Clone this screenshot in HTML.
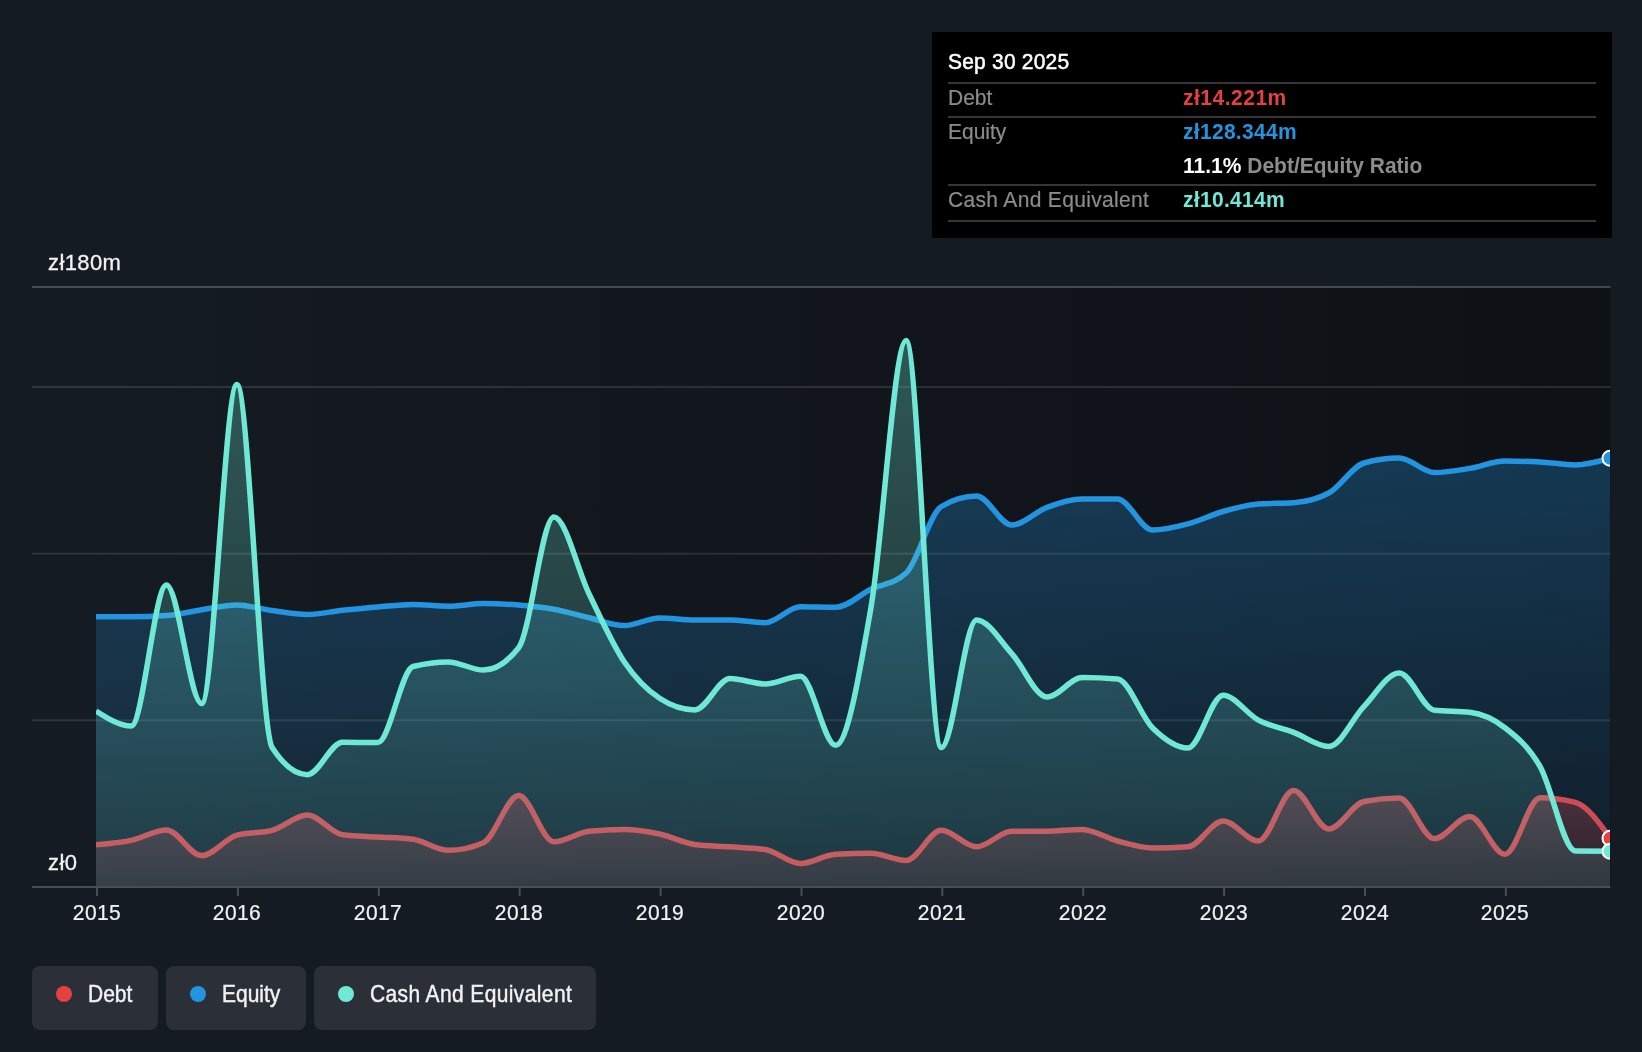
<!DOCTYPE html>
<html><head><meta charset="utf-8">
<style>
html,body{margin:0;padding:0;}
body{width:1642px;height:1052px;background:#151b22;position:relative;overflow:hidden;font-family:"Liberation Sans",sans-serif;color:#fff;}
svg{position:absolute;left:0;top:0;}
.t{position:absolute;white-space:nowrap;line-height:1;}
.sy{transform:scaleY(1.1);transform-origin:0 80%;will-change:transform;}
#tip .sy{transform:scaleY(1.04);}
.ax.sy{transform:scaleY(1.02);}
.yr.sy{transform:scaleY(1.08);}
.yr{position:absolute;top:901.5px;width:80px;text-align:center;font-size:21px;color:#f2f2f2;line-height:21px;letter-spacing:0.4px;-webkit-text-stroke:0.2px #f2f2f2;}
.ax{position:absolute;left:48px;font-size:22px;color:#f2f2f2;line-height:22px;letter-spacing:0.4px;-webkit-text-stroke:0.3px #f2f2f2;}
#tip{position:absolute;left:932px;top:32px;width:680px;height:206px;background:#000;}
.hl{position:absolute;left:16px;width:648px;height:2px;background:#363636;}
.lab{position:absolute;left:16px;font-size:21px;color:#8c8c8c;line-height:21px;-webkit-text-stroke:0.2px #8c8c8c;}
.val{position:absolute;left:251px;font-size:21px;font-weight:bold;line-height:21px;}
.pill{position:absolute;top:966px;height:64px;background:#2b2f37;border-radius:8px;}
.dot{position:absolute;top:20px;left:24px;width:16px;height:16px;border-radius:50%;}
.pt{position:absolute;left:56px;top:18px;font-size:21px;line-height:21px;color:#f2f2f2;-webkit-text-stroke:0.4px #f2f2f2;}
</style></head><body>
<svg width="1642" height="1052" viewBox="0 0 1642 1052">
<defs>
<linearGradient id="plotbg" x1="96" y1="0" x2="1610" y2="0" gradientUnits="userSpaceOnUse">
<stop offset="0" stop-color="#151b22"/><stop offset="1" stop-color="#0e1116"/>
</linearGradient>
<linearGradient id="gE" x1="0" y1="458" x2="0" y2="886" gradientUnits="userSpaceOnUse">
<stop offset="0" stop-color="#2394df" stop-opacity="0.30"/><stop offset="1" stop-color="#2394df" stop-opacity="0.09"/>
</linearGradient>
<linearGradient id="gC" x1="0" y1="340" x2="0" y2="886" gradientUnits="userSpaceOnUse">
<stop offset="0" stop-color="#6fe9d6" stop-opacity="0.31"/><stop offset="1" stop-color="#6fe9d6" stop-opacity="0.11"/>
</linearGradient>
<linearGradient id="gD" x1="0" y1="790" x2="0" y2="886" gradientUnits="userSpaceOnUse">
<stop offset="0" stop-color="#e64141" stop-opacity="0.32"/><stop offset="1" stop-color="#e64141" stop-opacity="0.12"/>
</linearGradient>
<clipPath id="clip"><rect x="96" y="0" width="1514" height="886"/></clipPath>
</defs>
<rect x="96" y="287" width="1514.5" height="600" fill="url(#plotbg)"/>
<rect x="32" y="286" width="1578.5" height="2" fill="#ffffff" fill-opacity="0.22"/>
<rect x="32" y="386" width="1578.5" height="2" fill="#ffffff" fill-opacity="0.11"/>
<rect x="32" y="552.7" width="1578.5" height="2" fill="#ffffff" fill-opacity="0.11"/>
<rect x="32" y="719.3" width="1578.5" height="2" fill="#ffffff" fill-opacity="0.11"/>
<g clip-path="url(#clip)">
<path d="M96.00,844.80C107.74,843.83,119.48,842.87,131.22,840.40C142.96,837.93,154.70,830.00,166.45,830.00C178.19,830.00,189.93,855.60,201.67,855.60C213.41,855.60,225.15,838.30,236.89,835.10C248.63,831.90,260.37,833.50,272.11,830.30C283.85,827.10,295.59,815.00,307.34,815.00C319.08,815.00,330.82,833.33,342.56,834.80C354.30,836.27,366.04,836.27,377.78,837.00C389.52,837.73,401.26,837.73,413.00,839.20C424.74,840.67,436.48,850.30,448.23,850.30C459.97,850.30,471.71,847.77,483.45,842.70C495.19,837.63,506.93,795.50,518.67,795.50C530.41,795.50,542.15,841.80,553.89,841.80C565.63,841.80,577.37,832.33,589.12,831.20C600.86,830.07,612.60,829.50,624.34,829.50C636.08,829.50,647.82,831.50,659.56,834.00C671.30,836.50,683.04,842.97,694.78,844.50C706.52,846.03,718.27,845.97,730.01,846.80C741.75,847.63,753.49,847.70,765.23,849.50C776.97,851.30,788.71,863.50,800.45,863.50C812.19,863.50,823.93,854.80,835.67,854.20C847.41,853.60,859.16,853.30,870.90,853.30C882.64,853.30,894.38,860.40,906.12,860.40C917.86,860.40,929.60,830.30,941.34,830.30C953.08,830.30,964.82,846.80,976.56,846.80C988.30,846.80,1000.05,831.20,1011.79,831.20C1023.53,831.20,1035.27,831.20,1047.01,831.20C1058.75,831.20,1070.49,829.50,1082.23,829.50C1093.97,829.50,1105.71,837.92,1117.45,841.00C1129.20,844.08,1140.94,848.00,1152.68,848.00C1164.42,848.00,1176.16,847.60,1187.90,846.80C1199.64,846.00,1211.38,821.00,1223.12,821.00C1234.86,821.00,1246.60,841.00,1258.34,841.00C1270.09,841.00,1281.83,790.50,1293.57,790.50C1305.31,790.50,1317.05,828.90,1328.79,828.90C1340.53,828.90,1352.27,803.83,1364.01,801.50C1375.75,799.17,1387.49,798.00,1399.23,798.00C1410.98,798.00,1422.72,838.60,1434.46,838.60C1446.20,838.60,1457.94,816.50,1469.68,816.50C1481.42,816.50,1493.16,854.20,1504.90,854.20C1516.64,854.20,1528.38,797.70,1540.12,797.70C1551.87,797.70,1563.61,799.27,1575.35,802.40C1587.09,805.53,1598.83,822.07,1610.57,838.60L1610.57,886 L96.00,886Z" fill="url(#gD)"/>
<path d="M96.00,844.80C107.74,843.83,119.48,842.87,131.22,840.40C142.96,837.93,154.70,830.00,166.45,830.00C178.19,830.00,189.93,855.60,201.67,855.60C213.41,855.60,225.15,838.30,236.89,835.10C248.63,831.90,260.37,833.50,272.11,830.30C283.85,827.10,295.59,815.00,307.34,815.00C319.08,815.00,330.82,833.33,342.56,834.80C354.30,836.27,366.04,836.27,377.78,837.00C389.52,837.73,401.26,837.73,413.00,839.20C424.74,840.67,436.48,850.30,448.23,850.30C459.97,850.30,471.71,847.77,483.45,842.70C495.19,837.63,506.93,795.50,518.67,795.50C530.41,795.50,542.15,841.80,553.89,841.80C565.63,841.80,577.37,832.33,589.12,831.20C600.86,830.07,612.60,829.50,624.34,829.50C636.08,829.50,647.82,831.50,659.56,834.00C671.30,836.50,683.04,842.97,694.78,844.50C706.52,846.03,718.27,845.97,730.01,846.80C741.75,847.63,753.49,847.70,765.23,849.50C776.97,851.30,788.71,863.50,800.45,863.50C812.19,863.50,823.93,854.80,835.67,854.20C847.41,853.60,859.16,853.30,870.90,853.30C882.64,853.30,894.38,860.40,906.12,860.40C917.86,860.40,929.60,830.30,941.34,830.30C953.08,830.30,964.82,846.80,976.56,846.80C988.30,846.80,1000.05,831.20,1011.79,831.20C1023.53,831.20,1035.27,831.20,1047.01,831.20C1058.75,831.20,1070.49,829.50,1082.23,829.50C1093.97,829.50,1105.71,837.92,1117.45,841.00C1129.20,844.08,1140.94,848.00,1152.68,848.00C1164.42,848.00,1176.16,847.60,1187.90,846.80C1199.64,846.00,1211.38,821.00,1223.12,821.00C1234.86,821.00,1246.60,841.00,1258.34,841.00C1270.09,841.00,1281.83,790.50,1293.57,790.50C1305.31,790.50,1317.05,828.90,1328.79,828.90C1340.53,828.90,1352.27,803.83,1364.01,801.50C1375.75,799.17,1387.49,798.00,1399.23,798.00C1410.98,798.00,1422.72,838.60,1434.46,838.60C1446.20,838.60,1457.94,816.50,1469.68,816.50C1481.42,816.50,1493.16,854.20,1504.90,854.20C1516.64,854.20,1528.38,797.70,1540.12,797.70C1551.87,797.70,1563.61,799.27,1575.35,802.40C1587.09,805.53,1598.83,822.07,1610.57,838.60" fill="none" stroke="#e64141" stroke-width="5.5" stroke-linejoin="round"/>
<path d="M96.00,616.80C107.74,616.80,119.48,616.80,131.22,616.80C142.96,616.80,154.70,616.40,166.45,615.60C178.19,614.80,189.93,611.47,201.67,609.70C213.41,607.93,225.15,605.00,236.89,605.00C248.63,605.00,260.37,609.02,272.11,610.60C283.85,612.18,295.59,614.50,307.34,614.50C319.08,614.50,330.82,611.55,342.56,610.30C354.30,609.05,366.04,607.98,377.78,607.00C389.52,606.02,401.26,604.40,413.00,604.40C424.74,604.40,436.48,606.20,448.23,606.20C459.97,606.20,471.71,603.60,483.45,603.60C495.19,603.60,506.93,604.07,518.67,605.00C530.41,605.93,542.15,607.08,553.89,609.20C565.63,611.32,577.37,614.98,589.12,617.70C600.86,620.42,612.60,625.50,624.34,625.50C636.08,625.50,647.82,618.00,659.56,618.00C671.30,618.00,683.04,620.00,694.78,620.00C706.52,620.00,718.27,620.00,730.01,620.00C741.75,620.00,753.49,622.70,765.23,622.70C776.97,622.70,788.71,606.80,800.45,606.80C812.19,606.80,823.93,607.30,835.67,607.30C847.41,607.30,859.16,595.02,870.90,589.30C882.64,583.58,894.38,583.87,906.12,573.00C917.86,562.13,929.60,513.43,941.34,506.50C953.08,499.57,964.82,496.10,976.56,496.10C988.30,496.10,1000.05,525.10,1011.79,525.10C1023.53,525.10,1035.27,511.73,1047.01,507.40C1058.75,503.07,1070.49,499.10,1082.23,499.10C1093.97,499.10,1105.71,499.10,1117.45,499.10C1129.20,499.10,1140.94,530.00,1152.68,530.00C1164.42,530.00,1176.16,526.98,1187.90,523.90C1199.64,520.82,1211.38,514.83,1223.12,511.50C1234.86,508.17,1246.60,504.70,1258.34,503.90C1270.09,503.10,1281.83,503.50,1293.57,502.70C1305.31,501.90,1317.05,499.47,1328.79,493.00C1340.53,486.53,1352.27,466.33,1364.01,463.00C1375.75,459.67,1387.49,458.00,1399.23,458.00C1410.98,458.00,1422.72,472.50,1434.46,472.50C1446.20,472.50,1457.94,470.30,1469.68,468.40C1481.42,466.50,1493.16,461.10,1504.90,461.10C1516.64,461.10,1528.38,461.37,1540.12,461.90C1551.87,462.43,1563.61,464.90,1575.35,464.90C1587.09,464.90,1598.83,461.55,1610.57,458.20L1610.57,886 L96.00,886Z" fill="url(#gE)"/>
<path d="M96.00,616.80C107.74,616.80,119.48,616.80,131.22,616.80C142.96,616.80,154.70,616.40,166.45,615.60C178.19,614.80,189.93,611.47,201.67,609.70C213.41,607.93,225.15,605.00,236.89,605.00C248.63,605.00,260.37,609.02,272.11,610.60C283.85,612.18,295.59,614.50,307.34,614.50C319.08,614.50,330.82,611.55,342.56,610.30C354.30,609.05,366.04,607.98,377.78,607.00C389.52,606.02,401.26,604.40,413.00,604.40C424.74,604.40,436.48,606.20,448.23,606.20C459.97,606.20,471.71,603.60,483.45,603.60C495.19,603.60,506.93,604.07,518.67,605.00C530.41,605.93,542.15,607.08,553.89,609.20C565.63,611.32,577.37,614.98,589.12,617.70C600.86,620.42,612.60,625.50,624.34,625.50C636.08,625.50,647.82,618.00,659.56,618.00C671.30,618.00,683.04,620.00,694.78,620.00C706.52,620.00,718.27,620.00,730.01,620.00C741.75,620.00,753.49,622.70,765.23,622.70C776.97,622.70,788.71,606.80,800.45,606.80C812.19,606.80,823.93,607.30,835.67,607.30C847.41,607.30,859.16,595.02,870.90,589.30C882.64,583.58,894.38,583.87,906.12,573.00C917.86,562.13,929.60,513.43,941.34,506.50C953.08,499.57,964.82,496.10,976.56,496.10C988.30,496.10,1000.05,525.10,1011.79,525.10C1023.53,525.10,1035.27,511.73,1047.01,507.40C1058.75,503.07,1070.49,499.10,1082.23,499.10C1093.97,499.10,1105.71,499.10,1117.45,499.10C1129.20,499.10,1140.94,530.00,1152.68,530.00C1164.42,530.00,1176.16,526.98,1187.90,523.90C1199.64,520.82,1211.38,514.83,1223.12,511.50C1234.86,508.17,1246.60,504.70,1258.34,503.90C1270.09,503.10,1281.83,503.50,1293.57,502.70C1305.31,501.90,1317.05,499.47,1328.79,493.00C1340.53,486.53,1352.27,466.33,1364.01,463.00C1375.75,459.67,1387.49,458.00,1399.23,458.00C1410.98,458.00,1422.72,472.50,1434.46,472.50C1446.20,472.50,1457.94,470.30,1469.68,468.40C1481.42,466.50,1493.16,461.10,1504.90,461.10C1516.64,461.10,1528.38,461.37,1540.12,461.90C1551.87,462.43,1563.61,464.90,1575.35,464.90C1587.09,464.90,1598.83,461.55,1610.57,458.20" fill="none" stroke="#2394df" stroke-width="5.5" stroke-linejoin="round"/>
<path d="M96.00,711.00C107.74,718.50,119.48,726.00,131.22,726.00C142.96,726.00,154.70,585.00,166.45,585.00C178.19,585.00,189.93,703.50,201.67,703.50C213.41,703.50,225.15,384.50,236.89,384.50C248.63,384.50,260.37,729.37,272.11,747.50C283.85,765.63,295.59,774.70,307.34,774.70C319.08,774.70,330.82,742.20,342.56,742.20C354.30,742.20,366.04,742.60,377.78,742.60C389.52,742.60,401.26,669.57,413.00,666.50C424.74,663.43,436.48,661.90,448.23,661.90C459.97,661.90,471.71,670.10,483.45,670.10C495.19,670.10,506.93,662.67,518.67,647.80C530.41,632.93,542.15,517.00,553.89,517.00C565.63,517.00,577.37,569.83,589.12,594.00C600.86,618.17,612.60,644.62,624.34,662.00C636.08,679.38,647.82,690.57,659.56,698.30C671.30,706.03,683.04,709.90,694.78,709.90C706.52,709.90,718.27,678.60,730.01,678.60C741.75,678.60,753.49,684.00,765.23,684.00C776.97,684.00,788.71,676.30,800.45,676.30C812.19,676.30,823.93,745.30,835.67,745.30C847.41,745.30,859.16,675.47,870.90,608.00C882.64,540.53,894.38,340.50,906.12,340.50C917.86,340.50,929.60,747.60,941.34,747.60C953.08,747.60,964.82,620.00,976.56,620.00C988.30,620.00,1000.05,640.77,1011.79,653.60C1023.53,666.43,1035.27,697.00,1047.01,697.00C1058.75,697.00,1070.49,677.60,1082.23,677.60C1093.97,677.60,1105.71,678.10,1117.45,679.10C1129.20,680.10,1140.94,716.52,1152.68,728.00C1164.42,739.48,1176.16,748.00,1187.90,748.00C1199.64,748.00,1211.38,695.20,1223.12,695.20C1234.86,695.20,1246.60,713.90,1258.34,720.10C1270.09,726.30,1281.83,728.00,1293.57,732.40C1305.31,736.80,1317.05,746.50,1328.79,746.50C1340.53,746.50,1352.27,718.55,1364.01,706.30C1375.75,694.05,1387.49,673.00,1399.23,673.00C1410.98,673.00,1422.72,708.97,1434.46,710.30C1446.20,711.63,1457.94,710.97,1469.68,712.30C1481.42,713.63,1493.16,718.65,1504.90,727.70C1516.64,736.75,1528.38,746.05,1540.12,766.60C1551.87,787.15,1563.61,850.80,1575.35,851.00C1587.09,851.20,1598.83,851.25,1610.57,851.30L1610.57,886 L96.00,886Z" fill="url(#gC)"/>
<path d="M96.00,711.00C107.74,718.50,119.48,726.00,131.22,726.00C142.96,726.00,154.70,585.00,166.45,585.00C178.19,585.00,189.93,703.50,201.67,703.50C213.41,703.50,225.15,384.50,236.89,384.50C248.63,384.50,260.37,729.37,272.11,747.50C283.85,765.63,295.59,774.70,307.34,774.70C319.08,774.70,330.82,742.20,342.56,742.20C354.30,742.20,366.04,742.60,377.78,742.60C389.52,742.60,401.26,669.57,413.00,666.50C424.74,663.43,436.48,661.90,448.23,661.90C459.97,661.90,471.71,670.10,483.45,670.10C495.19,670.10,506.93,662.67,518.67,647.80C530.41,632.93,542.15,517.00,553.89,517.00C565.63,517.00,577.37,569.83,589.12,594.00C600.86,618.17,612.60,644.62,624.34,662.00C636.08,679.38,647.82,690.57,659.56,698.30C671.30,706.03,683.04,709.90,694.78,709.90C706.52,709.90,718.27,678.60,730.01,678.60C741.75,678.60,753.49,684.00,765.23,684.00C776.97,684.00,788.71,676.30,800.45,676.30C812.19,676.30,823.93,745.30,835.67,745.30C847.41,745.30,859.16,675.47,870.90,608.00C882.64,540.53,894.38,340.50,906.12,340.50C917.86,340.50,929.60,747.60,941.34,747.60C953.08,747.60,964.82,620.00,976.56,620.00C988.30,620.00,1000.05,640.77,1011.79,653.60C1023.53,666.43,1035.27,697.00,1047.01,697.00C1058.75,697.00,1070.49,677.60,1082.23,677.60C1093.97,677.60,1105.71,678.10,1117.45,679.10C1129.20,680.10,1140.94,716.52,1152.68,728.00C1164.42,739.48,1176.16,748.00,1187.90,748.00C1199.64,748.00,1211.38,695.20,1223.12,695.20C1234.86,695.20,1246.60,713.90,1258.34,720.10C1270.09,726.30,1281.83,728.00,1293.57,732.40C1305.31,736.80,1317.05,746.50,1328.79,746.50C1340.53,746.50,1352.27,718.55,1364.01,706.30C1375.75,694.05,1387.49,673.00,1399.23,673.00C1410.98,673.00,1422.72,708.97,1434.46,710.30C1446.20,711.63,1457.94,710.97,1469.68,712.30C1481.42,713.63,1493.16,718.65,1504.90,727.70C1516.64,736.75,1528.38,746.05,1540.12,766.60C1551.87,787.15,1563.61,850.80,1575.35,851.00C1587.09,851.20,1598.83,851.25,1610.57,851.30" fill="none" stroke="#6fe9d6" stroke-width="5.5" stroke-linejoin="round"/>
<circle cx="1610" cy="458.2" r="7.5" fill="#2394df" stroke="#fff" stroke-width="2"/>
<circle cx="1610" cy="838.3" r="7.5" fill="#e64141" stroke="#fff" stroke-width="2"/>
<circle cx="1610" cy="851.3" r="7.5" fill="#6fe9d6" stroke="#fff" stroke-width="2"/>
</g>
<rect x="32" y="886" width="1578.5" height="2" fill="#4a4e53"/>
<rect x="96.0" y="886" width="2" height="10" fill="#4a4e53"/><rect x="236.9" y="886" width="2" height="10" fill="#4a4e53"/><rect x="377.8" y="886" width="2" height="10" fill="#4a4e53"/><rect x="518.7" y="886" width="2" height="10" fill="#4a4e53"/><rect x="659.6" y="886" width="2" height="10" fill="#4a4e53"/><rect x="800.5" y="886" width="2" height="10" fill="#4a4e53"/><rect x="941.3" y="886" width="2" height="10" fill="#4a4e53"/><rect x="1082.2" y="886" width="2" height="10" fill="#4a4e53"/><rect x="1223.1" y="886" width="2" height="10" fill="#4a4e53"/><rect x="1364.0" y="886" width="2" height="10" fill="#4a4e53"/><rect x="1504.9" y="886" width="2" height="10" fill="#4a4e53"/>
</svg>
<div class="ax sy" style="top:252px">zł180m</div>
<div class="ax sy" style="top:852px">zł0</div>
<div class="yr sy" style="left:56.5px">2015</div><div class="yr sy" style="left:197.4px">2016</div><div class="yr sy" style="left:338.3px">2017</div><div class="yr sy" style="left:479.2px">2018</div><div class="yr sy" style="left:620.1px">2019</div><div class="yr sy" style="left:761.0px">2020</div><div class="yr sy" style="left:901.8px">2021</div><div class="yr sy" style="left:1042.7px">2022</div><div class="yr sy" style="left:1183.6px">2023</div><div class="yr sy" style="left:1324.5px">2024</div><div class="yr sy" style="left:1465.4px">2025</div>
<div id="tip">
<div class="t sy" style="left:16px;top:19px;font-size:21px;line-height:21px;color:#fff;-webkit-text-stroke:0.5px #fff;letter-spacing:0.2px">Sep 30 2025</div>
<div class="hl" style="top:50px"></div>
<div class="lab sy" style="top:55px">Debt</div><div class="val sy" style="top:55px;color:#e64141;letter-spacing:0.5px">zł14.221m</div>
<div class="hl" style="top:84px"></div>
<div class="lab sy" style="top:89px">Equity</div><div class="val sy" style="top:89px;color:#2394df;letter-spacing:0.3px">zł128.344m</div>
<div class="val sy" style="top:123px;color:#fff">11.1% <span style="color:#8c8c8c">Debt/Equity Ratio</span></div>
<div class="hl" style="top:152px"></div>
<div class="lab sy" style="top:157px;letter-spacing:0.33px">Cash And Equivalent</div><div class="val sy" style="top:157px;color:#6fe9d6;letter-spacing:0.3px">zł10.414m</div>
<div class="hl" style="top:188px"></div>
</div>
<div class="pill" style="left:32px;width:126px"><div class="dot" style="background:#e64141"></div><div class="pt sy">Debt</div></div>
<div class="pill" style="left:166px;width:140px"><div class="dot" style="background:#2394df"></div><div class="pt sy">Equity</div></div>
<div class="pill" style="left:314px;width:282px"><div class="dot" style="background:#6fe9d6"></div><div class="pt sy" style="letter-spacing:0.38px">Cash And Equivalent</div></div>
</body></html>
